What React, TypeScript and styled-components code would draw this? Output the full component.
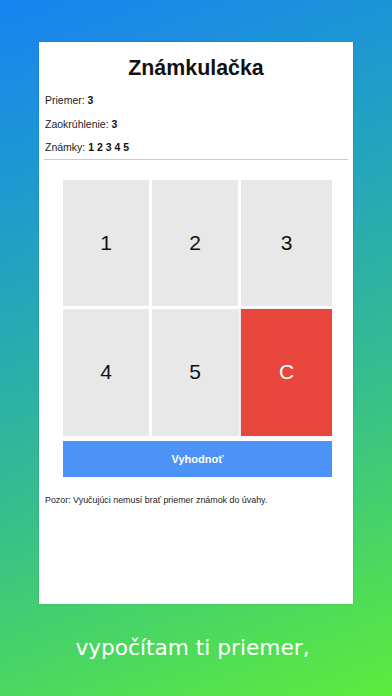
import React, { useState } from 'react';
import styled, { createGlobalStyle } from 'styled-components';

const GlobalStyle = createGlobalStyle`
  html, body {
    margin: 0;
    padding: 0;
  }
  body {
    font-family: 'Liberation Sans', Arial, sans-serif;
  }
`;

const KEYS = ['1', '2', '3', '4', '5'];

const App: React.FC = () => {
  const [grades] = useState<number[]>([1, 2, 3, 4, 5]);

  return (
    <Page>
      <GlobalStyle />
      <Card>
        <Title>Známkulačka</Title>
        <InfoLine>
          Priemer: <b>3</b>
        </InfoLine>
        <InfoLine>
          Zaokrúhlenie: <b>3</b>
        </InfoLine>
        <InfoLine>
          Známky: <b>{grades.join(' ')}</b>
        </InfoLine>
        <Divider />

        <Keypad>
          {KEYS.map((k) => (
            <Key key={k}>{k}</Key>
          ))}
          <Key $clear>C</Key>
        </Keypad>
        <SubmitButton>Vyhodnoť</SubmitButton>

        <Note>Pozor: Vyučujúci nemusí brať priemer známok do úvahy.</Note>
      </Card>
      <Caption>vypočítam ti priemer,</Caption>
    </Page>
  );
};

export default App;

// --- styled-components ---
const Page = styled.div`
  width: 392px;
  height: 696px;
  overflow: hidden;
  box-sizing: border-box;
  padding-top: 42px;
  background: linear-gradient(160deg, #1783f2 0%, #22a0c4 30%, #35bc90 60%, #5cec3c 100%);
`;

const Card = styled.div`
  margin-left: 39px;
  width: 314px;
  height: 562px;
  box-sizing: border-box;
  padding: 13px 5px 0;
  background: #ffffff;
  box-shadow: 0 0 2px rgba(0, 0, 0, 0.15);
`;

const Title = styled.h1`
  margin: 0 0 13px;
  font-size: 21.4px;
  line-height: 26px;
  font-weight: 700;
  text-align: center;
  color: #111111;
`;

const InfoLine = styled.div`
  padding-left: 1px;
  font-size: 10.5px;
  line-height: 13px;
  height: 23.5px;
  color: #222222;

  b {
    font-weight: 700;
    color: #111111;
  }
`;

const Divider = styled.div`
  height: 1px;
  margin-top: -6px;
  background: #cccccc;
`;

const Keypad = styled.div`
  display: grid;
  grid-template-columns: 86px 86px 1fr;
  grid-template-rows: 126px 127px;
  gap: 3px;
  width: 269px;
  margin: 20px 0 0 19px;
`;

const Key = styled.div<{ $clear?: boolean }>`
  display: flex;
  align-items: center;
  justify-content: center;
  font-size: 21px;
  color: ${(p) => (p.$clear ? '#ffffff' : '#111111')};
  background: ${(p) => (p.$clear ? '#e8463c' : '#e8e8e8')};
  box-shadow: ${(p) => (p.$clear ? '-2px 0 3px rgba(0, 0, 0, 0.12)' : 'none')};
`;

const SubmitButton = styled.div`
  display: flex;
  align-items: center;
  justify-content: center;
  width: 269px;
  height: 36px;
  margin: 5px 0 0 19px;
  background: #4d93f7;
  color: #ffffff;
  font-size: 11px;
  font-weight: 700;
`;

const Note = styled.p`
  margin: 17px 0 0 1px;
  font-size: 8.9px;
  line-height: 12px;
  color: #222222;
`;

const Caption = styled.div`
  margin-top: 31px;
  padding-right: 7px;
  text-align: center;
  font-family: 'DejaVu Sans', Verdana, sans-serif;
  font-size: 21.7px;
  line-height: 26px;
  color: #ffffff;
`;
